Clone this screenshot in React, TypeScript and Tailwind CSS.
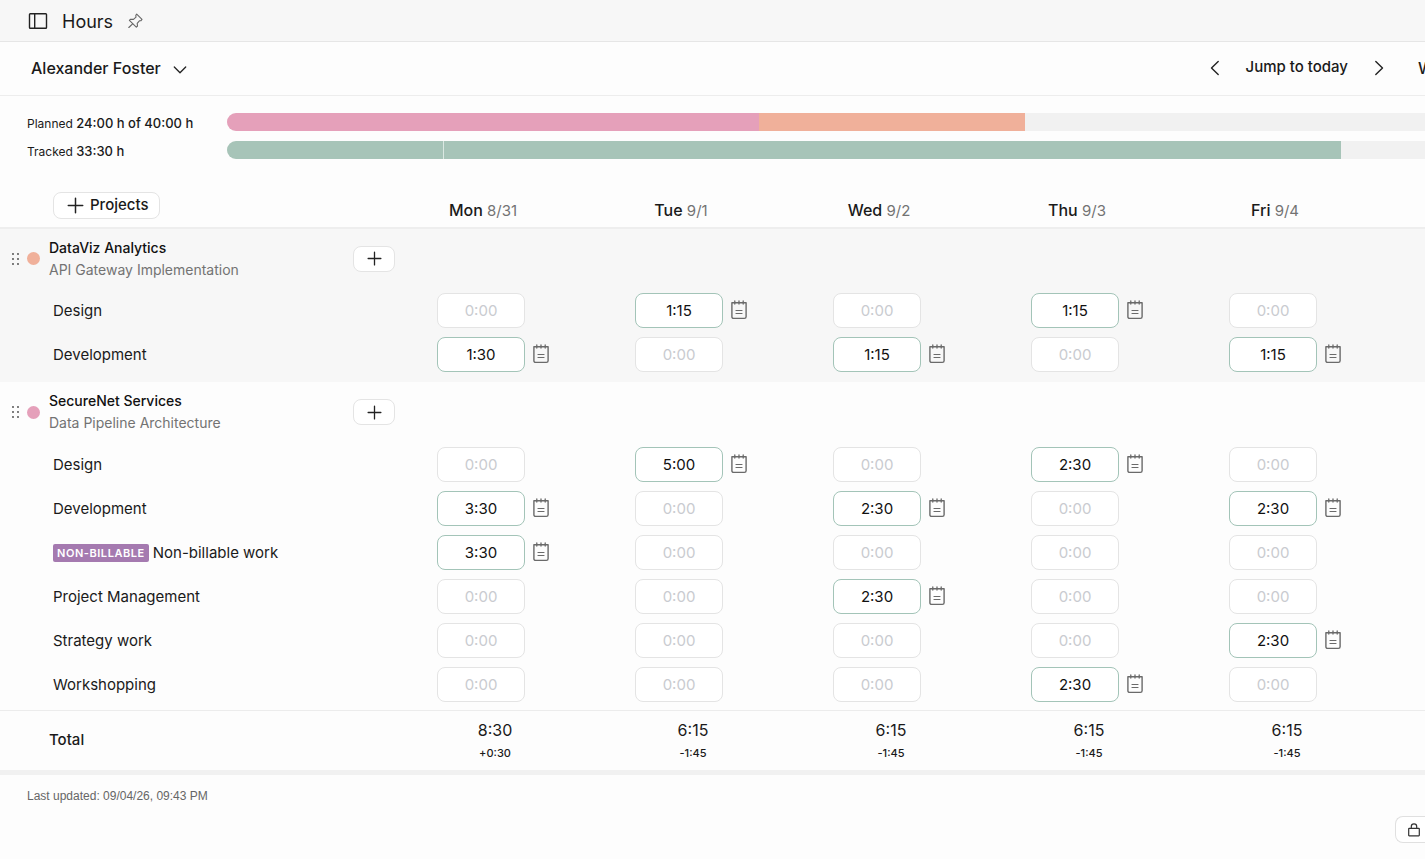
import React from "react";

type Task = { name: string; nonBillable?: boolean; hours: string[] };
type Project = {
  client: string;
  name: string;
  dot: string;
  background: string;
  spacer: string;
  tasks: Task[];
};

const days = [
  { label: "Mon", date: "8/31", total: "8:30", diff: "+0:30" },
  { label: "Tue", date: "9/1", total: "6:15", diff: "-1:45" },
  { label: "Wed", date: "9/2", total: "6:15", diff: "-1:45" },
  { label: "Thu", date: "9/3", total: "6:15", diff: "-1:45" },
  { label: "Fri", date: "9/4", total: "6:15", diff: "-1:45" },
];

const projects: Project[] = [
  {
    client: "DataViz Analytics",
    name: "API Gateway Implementation",
    dot: "bg-[#f0b09a]",
    background: "bg-[#f7f7f7]",
    spacer: "h-1.5",
    tasks: [
      { name: "Design", hours: ["", "1:15", "", "1:15", ""] },
      { name: "Development", hours: ["1:30", "", "1:15", "", "1:15"] },
    ],
  },
  {
    client: "SecureNet Services",
    name: "Data Pipeline Architecture",
    dot: "bg-[#e5a0ba]",
    background: "bg-[#fdfdfd]",
    spacer: "h-1",
    tasks: [
      { name: "Design", hours: ["", "5:00", "", "2:30", ""] },
      { name: "Development", hours: ["3:30", "", "2:30", "", "2:30"] },
      { name: "Non-billable work", nonBillable: true, hours: ["3:30", "", "", "", ""] },
      { name: "Project Management", hours: ["", "", "2:30", "", ""] },
      { name: "Strategy work", hours: ["", "", "", "", "2:30"] },
      { name: "Workshopping", hours: ["", "", "", "2:30", ""] },
    ],
  },
];

function SidebarIcon() {
  return (
    <svg width="20" height="18" viewBox="0 0 20 18" fill="none" stroke="#222" strokeWidth="1.4">
      <rect x="1.5" y="1.7" width="17" height="14.6" rx="0.8" />
      <path d="M6.7 1.7v14.6" />
    </svg>
  );
}

function PinIcon() {
  return (
    <svg width="16" height="16" viewBox="0 0 16 16" fill="none" stroke="#666" strokeWidth="1.1" strokeLinejoin="round" strokeLinecap="round">
      <path d="M9.7 1.1 15 6.3l-1 1.3-1.6.2-2.200 2.500.3 2.700-1.200 1.200L2.400 7.400l1.200-1.200 2.900.2 2.500-2.200-.2-1.900z" />
      <path d="M5.600 10.800 1.800 14.500" />
    </svg>
  );
}

function NoteIcon() {
  return (
    <svg width="16" height="20" viewBox="0 0 16 20" fill="none" stroke="#6a6a6a" strokeWidth="1.4" strokeLinecap="round">
      <path d="M.9 2.700h14.200v14c0 1-.7 1.700-1.700 1.700H2.600c-1 0-1.700-.7-1.700-1.700z" strokeLinejoin="round" />
      <path d="M3.800 1v3M8 1v3M12.200 1v3" strokeWidth="1.3" />
      <path d="M5 10.500h6M5 13.500h6" strokeWidth="1.2" />
    </svg>
  );
}

function PlusIcon({ className }: { className: string }) {
  return (
    <svg className={className} viewBox="0 0 16 16" fill="none" stroke="#222" strokeWidth="1.4" strokeLinecap="round">
      <path d="M8 1.200v13.600M1.200 8h13.600" />
    </svg>
  );
}

function Chevron({ direction }: { direction: "down" | "left" | "right" }) {
  if (direction === "down") {
    return (
      <svg width="14" height="8" viewBox="0 0 14 8" fill="none" stroke="#222" strokeWidth="1.3" strokeLinecap="round" strokeLinejoin="round">
        <path d="m1.300 1 5.700 5.800L12.700 1" />
      </svg>
    );
  }
  return (
    <svg width="10" height="16" viewBox="0 0 10 16" fill="none" stroke="#222" strokeWidth="1.4" strokeLinecap="round" strokeLinejoin="round">
      <path d={direction === "left" ? "M8.200 1.500 1.500 8l6.700 6.500" : "m1.800 1.500 6.700 6.500-6.700 6.500"} />
    </svg>
  );
}

function DragIcon() {
  return (
    <svg width="8" height="12" viewBox="0 0 8 12" fill="#444">
      {[1, 6, 11].map((y) => (
        <React.Fragment key={y}>
          <circle cx="1" cy={y} r="0.900" />
          <circle cx="6" cy={y} r="0.900" />
        </React.Fragment>
      ))}
    </svg>
  );
}

function LockIcon() {
  return (
    <svg width="12" height="14" viewBox="0 0 12 14" fill="none" stroke="#333" strokeWidth="1.2" strokeLinejoin="round">
      <rect x="0.700" y="5.300" width="10.600" height="7.500" rx="0.500" />
      <path d="M3.300 5.300V3.600a2.700 2.700 0 0 1 5.400 0v1.700" />
    </svg>
  );
}

function Bar({ segments, label }: { segments: { hours: number; color: string }[]; label: string }) {
  return (
    <div role="img" aria-label={label} className="flex h-[18px] w-[111%] overflow-hidden rounded-full bg-[#f1f1f1]">
      {segments.map((s, i) => (
        <div
          key={i}
          className={`h-full ${s.color} ${i > 0 && segments[0].color === s.color ? "border-l border-[#dbe8e2]" : ""}`}
          style={{ width: `${(s.hours / 40) * 100}%` }}
        />
      ))}
    </div>
  );
}

function HourCell({ value, label }: { value: string; label: string }) {
  return (
    <td className="p-0 pl-0.5 align-middle">
      <div className="flex items-center gap-2">
        <input
          type="text"
          aria-label={label}
          placeholder="0:00"
          defaultValue={value}
          className={`h-[35px] w-[88px] rounded-lg border bg-white text-center text-[15px] text-[#111] placeholder:text-[#c9cbd0] ${
            value ? "border-[#a3c4b8]" : "border-[#e4e4e4]"
          }`}
        />
        {value && (
          <button type="button" aria-label={`Note for ${label}`}>
            <NoteIcon />
          </button>
        )}
      </div>
    </td>
  );
}

export default function App() {
  return (
    <div className="min-h-screen overflow-hidden bg-[#fdfdfd] font-['Inter',sans-serif] text-[#1a1a1a]">
      <header className="flex h-[42px] items-center border-b border-[#e6e6e6] bg-[#f7f7f7] pl-7">
        <button type="button" aria-label="Toggle sidebar">
          <SidebarIcon />
        </button>
        <h1 className="ml-3.5 pt-0.5 text-lg">Hours</h1>
        <button type="button" aria-label="Pin page" className="ml-3.5">
          <PinIcon />
        </button>
      </header>

      <div className="flex h-[54px] items-center justify-between border-b border-[#ededed] pb-0.5 pl-[31px]">
        <button type="button" className="flex items-center gap-3 text-base font-medium">
          Alexander Foster
          <span className="pt-1">
            <Chevron direction="down" />
          </span>
        </button>
        <div className="flex items-center text-[15px] font-medium">
          <button type="button" aria-label="Previous week">
            <Chevron direction="left" />
          </button>
          <button type="button" className="mx-[26px]">
            Jump to today
          </button>
          <button type="button" aria-label="Next week">
            <Chevron direction="right" />
          </button>
          <button type="button" className="ml-[34px] w-[7px] overflow-hidden text-left text-base">
            W
          </button>
        </div>
      </div>

      <section className="flex flex-col gap-2.5 pt-[17px] pl-[27px]">
        <div className="flex h-[18px] items-center">
          <p className="w-[200px] shrink-0 pt-[3px] text-xs whitespace-nowrap">
            Planned <span className="text-[13px] font-medium">24:00 h of 40:00 h</span>
          </p>
          <div className="min-w-0 flex-1">
            <Bar
              label="Planned hours"
              segments={[
                { hours: 16, color: "bg-[#e5a0ba]" },
                { hours: 8, color: "bg-[#f0b09a]" },
              ]}
            />
          </div>
        </div>
        <div className="flex h-[18px] items-center">
          <p className="w-[200px] shrink-0 pt-[3px] text-xs whitespace-nowrap">
            Tracked <span className="text-[13px] font-medium">33:30 h</span>
          </p>
          <div className="min-w-0 flex-1">
            <Bar
              label="Tracked hours"
              segments={[
                { hours: 6.5, color: "bg-[#a7c4b8]" },
                { hours: 27, color: "bg-[#a7c4b8]" },
              ]}
            />
          </div>
        </div>
      </section>

      <table className="mt-[25px] w-full table-fixed border-collapse">
        <colgroup>
          <col className="w-[435px]" />
          {days.map((d) => (
            <col key={d.label} />
          ))}
        </colgroup>
        <thead>
          <tr className="h-11 border-b-2 border-[#eeeeee]">
            <th className="p-0 pl-[53px] text-left align-top font-normal">
              <button type="button" className="mt-2 flex h-[27px] items-center gap-1.5 rounded-lg border border-[#e4e4e4] bg-white pr-2.5 pl-[13px] text-[15px] font-medium">
                <PlusIcon className="size-[17px]" />
                Projects
              </button>
            </th>
            {days.map((d) => (
              <th key={d.label} scope="col" className="p-0 pl-0.5 align-top font-normal">
                <div className="w-[92px] pt-3.5 text-center text-[15px] leading-6 whitespace-nowrap text-[#737373]">
                  <span className="text-base font-medium text-[#1a1a1a]">{d.label}</span> {d.date}
                </div>
              </th>
            ))}
          </tr>
        </thead>
        {projects.map((p) => (
          <tbody key={p.client} className={p.background}>
            <tr className="h-[60px]">
              <th scope="rowgroup" className="p-0 pl-3 text-left font-normal" colSpan={6}>
                <div className="flex w-[383px] items-center">
                  <button type="button" aria-label={`Move ${p.client}`}>
                    <DragIcon />
                  </button>
                  <span className={`ml-[7px] size-[13px] rounded-full ${p.dot}`} />
                  <div className="ml-[9px] flex-1 text-sm leading-[22px]">
                    <div className="font-medium text-[#111]">{p.client}</div>
                    <div className="text-[#737373]">{p.name}</div>
                  </div>
                  <button
                    type="button"
                    aria-label={`Add task to ${p.client}`}
                    className="flex h-[26px] w-[42px] items-center justify-center rounded-lg border border-[#e4e4e4] bg-white"
                  >
                    <PlusIcon className="size-[15px]" />
                  </button>
                </div>
              </th>
            </tr>
            {p.tasks.map((t) => (
              <tr key={t.name} className="h-11">
                <th scope="row" className="p-0 pt-0.5 pl-[53px] text-left text-[15px] font-normal">
                  <span className="flex items-center gap-1">
                    {t.nonBillable && (
                      <span className="rounded-xs bg-[#a57ab0] px-1 text-[11px] leading-[18px] font-semibold tracking-wider text-white">
                        NON-BILLABLE
                      </span>
                    )}
                    {t.name}
                  </span>
                </th>
                {t.hours.map((h, i) => (
                  <HourCell key={i} value={h} label={`${t.name}, ${days[i].label} ${days[i].date}`} />
                ))}
              </tr>
            ))}
            <tr aria-hidden="true" className={p.spacer}>
              <td colSpan={6} className="p-0" />
            </tr>
          </tbody>
        ))}
        <tfoot>
          <tr className="h-[60px] border-t border-[#ececec]">
            <th scope="row" className="p-0 pl-[49px] text-left text-[15px] font-medium">
              Total
            </th>
            {days.map((d) => (
              <td key={d.label} className="p-0 pl-0.5">
                <div className="w-[116px] pt-1 text-center">
                  <div className="text-base leading-[23px]">{d.total}</div>
                  <div className="text-[11px] leading-[23px] font-medium">{d.diff}</div>
                </div>
              </td>
            ))}
          </tr>
        </tfoot>
      </table>

      <footer className="border-t-[5px] border-[#f1f1f1] pt-[11px]">
        <p className="pl-[27px] font-['Liberation_Sans',sans-serif] text-xs leading-5 text-[#666]">
          Last updated: 09/04/26, 09:43 PM
        </p>
        <div className="mt-2.5 flex justify-end">
          <button
            type="button"
            aria-label="Lock week"
            className="flex h-[27px] w-[30px] items-center rounded-l-lg border border-r-0 border-[#e0e0e0] bg-white pl-3"
          >
            <LockIcon />
          </button>
        </div>
      </footer>
    </div>
  );
}
